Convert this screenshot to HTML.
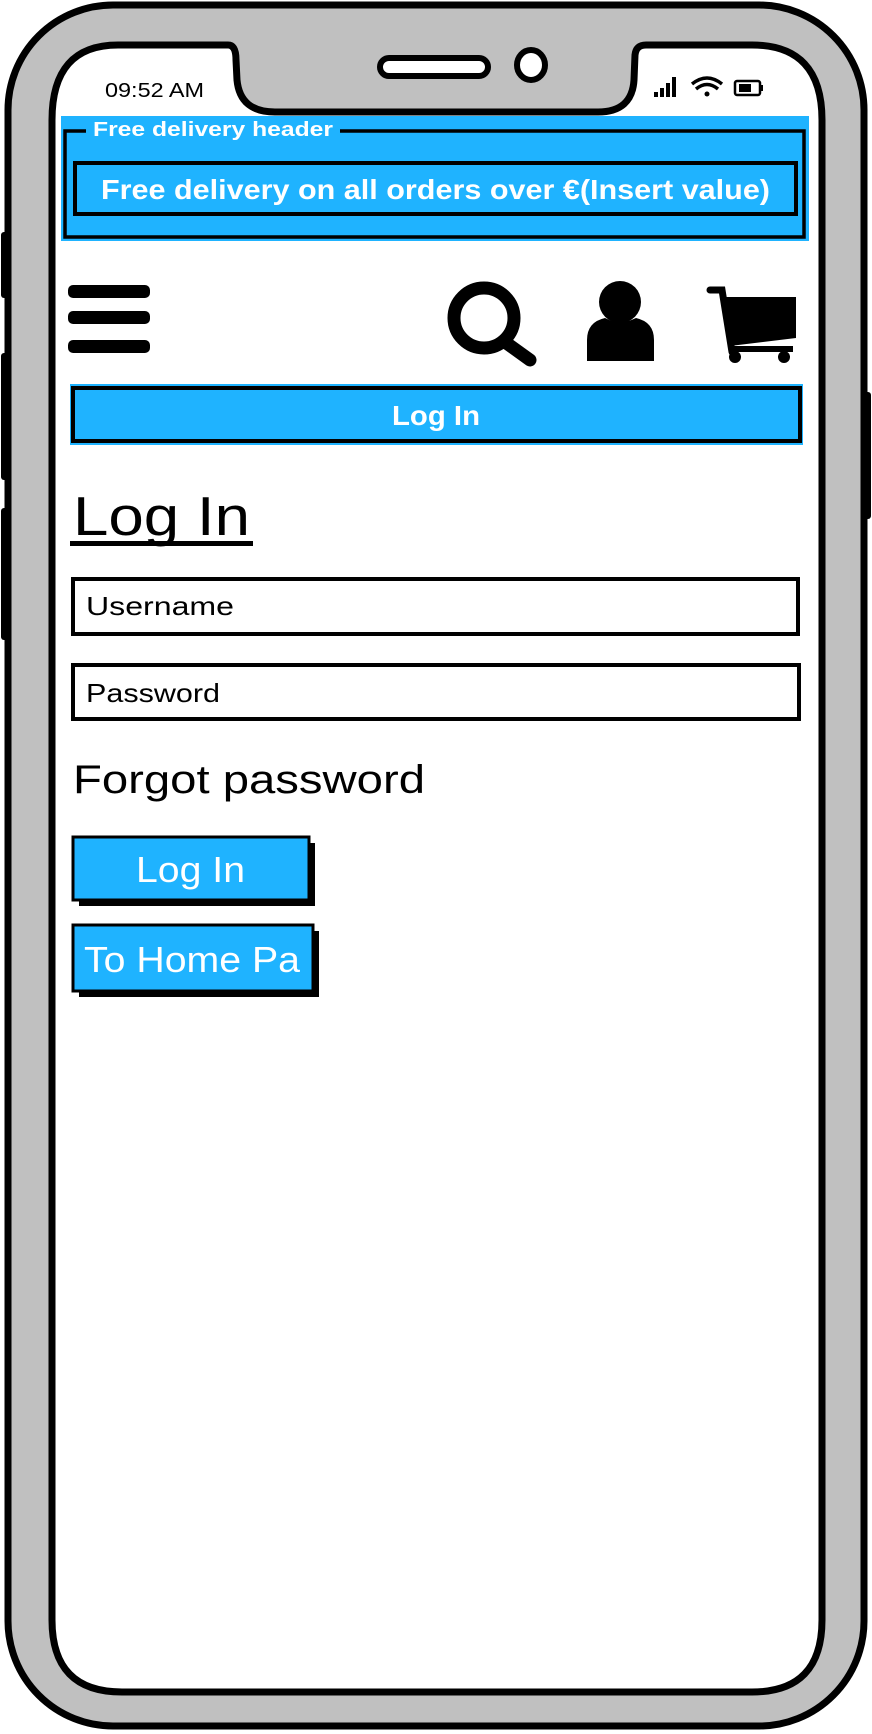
<!DOCTYPE html>
<html><head><meta charset="utf-8"><style>html,body{margin:0;padding:0;background:#fff}svg{display:block}text{font-family:"Liberation Sans",sans-serif}</style></head>
<body>
<svg width="872" height="1734" viewBox="0 0 872 1734" xmlns="http://www.w3.org/2000/svg">
<!-- side buttons -->
<rect x="1" y="232" width="8" height="66" rx="3" fill="#000"/>
<rect x="1" y="353" width="8" height="127" rx="3" fill="#000"/>
<rect x="1" y="508" width="8" height="132" rx="3" fill="#000"/>
<rect x="862" y="392" width="9" height="127" rx="3" fill="#000"/>
<!-- phone body -->
<rect x="8" y="5" width="856" height="1721" rx="105" fill="#c0c0c0" stroke="#000" stroke-width="7"/>
<!-- screen -->
<path d="M118 45 H228 Q236 45 236 60 L237 80 Q240 112 275 112 H598 Q632 112 634 80 L635 55 Q636 45 646 45 H752 Q822 45 822 120 V1620 Q822 1692 752 1692 H122 Q52 1692 52 1620 V120 Q52 45 118 45 Z" fill="#fff" stroke="#000" stroke-width="7"/>
<!-- speaker & camera -->
<rect x="380" y="58" width="108" height="18" rx="9" fill="#fff" stroke="#000" stroke-width="6"/>
<ellipse cx="531" cy="65" rx="14" ry="15" fill="#fff" stroke="#000" stroke-width="6"/>
<!-- status -->
<text x="105" y="97" font-size="20" textLength="99" lengthAdjust="spacingAndGlyphs">09:52 AM</text>
<rect x="654" y="92" width="4" height="5" fill="#000"/><rect x="660" y="88" width="4" height="9" fill="#000"/><rect x="666" y="83" width="4" height="14" fill="#000"/><rect x="672" y="77" width="4" height="20" fill="#000"/>
<path d="M692 84 Q707 72 722 84" fill="none" stroke="#000" stroke-width="3.5"/><path d="M696 89 Q707 80 718 89" fill="none" stroke="#000" stroke-width="3.5"/><circle cx="707" cy="94" r="2.5" fill="#000"/>
<rect x="735" y="81" width="25" height="14" rx="2" fill="none" stroke="#000" stroke-width="2.5"/><rect x="739" y="84" width="12" height="8" fill="#000"/><rect x="761" y="85" width="2" height="6" fill="#000"/>
<!-- free delivery header -->
<rect x="61" y="116" width="748" height="125" fill="#1fb3ff"/>
<rect x="65" y="131" width="739" height="106" fill="none" stroke="#000" stroke-width="3.5"/>
<rect x="86" y="118" width="254" height="22" fill="#1fb3ff"/>
<text x="93" y="136" font-size="20" font-weight="bold" fill="#fff" textLength="240" lengthAdjust="spacingAndGlyphs">Free delivery header</text>
<rect x="75" y="163" width="721" height="51" fill="#1fb3ff" stroke="#000" stroke-width="4"/>
<text x="101" y="199" font-size="28" font-weight="bold" fill="#fff" textLength="669" lengthAdjust="spacingAndGlyphs">Free delivery on all orders over €(Insert value)</text>
<!-- nav icons -->
<rect x="68" y="285" width="82" height="13" rx="5" fill="#000"/><rect x="68" y="311" width="82" height="13" rx="5" fill="#000"/><rect x="68" y="340" width="82" height="13" rx="5" fill="#000"/>
<circle cx="484" cy="318" r="30" fill="none" stroke="#000" stroke-width="13"/>
<line x1="505" y1="342" x2="530" y2="360" stroke="#000" stroke-width="13" stroke-linecap="round"/>
<circle cx="620" cy="302" r="21" fill="#000"/>
<path d="M587 361 V340 Q587 322 605 318 Q620 326 636 318 Q654 322 654 340 V361 Z" fill="#000"/>
<path d="M710 290 H722 L732 352" fill="none" stroke="#000" stroke-width="7" stroke-linecap="round"/>
<path d="M724 297 H796 V338 L730 346 Z" fill="#000"/>
<rect x="729" y="346" width="64" height="6" fill="#000"/>
<circle cx="735" cy="357" r="6" fill="#000"/><circle cx="784" cy="357" r="6" fill="#000"/>
<!-- Log In bar -->
<rect x="70" y="384" width="733" height="61" fill="#1fb3ff"/>
<rect x="73" y="388" width="727" height="53" fill="#1fb3ff" stroke="#000" stroke-width="4"/>
<text x="392" y="425" font-size="28" font-weight="bold" fill="#fff" textLength="88" lengthAdjust="spacingAndGlyphs">Log In</text>
<!-- heading -->
<text x="73" y="535" font-size="55" textLength="177" lengthAdjust="spacingAndGlyphs">Log In</text>
<rect x="70" y="541" width="183" height="5" fill="#000"/>
<!-- inputs -->
<rect x="73" y="579" width="725" height="55" fill="#fff" stroke="#000" stroke-width="4"/>
<text x="86" y="615" font-size="26" textLength="148" lengthAdjust="spacingAndGlyphs">Username</text>
<rect x="73" y="665" width="726" height="54" fill="#fff" stroke="#000" stroke-width="4"/>
<text x="86" y="702" font-size="26" textLength="134" lengthAdjust="spacingAndGlyphs">Password</text>
<text x="73" y="793" font-size="40" textLength="352" lengthAdjust="spacingAndGlyphs">Forgot password</text>
<!-- buttons -->
<rect x="79" y="843" width="236" height="63" fill="#000"/>
<rect x="73" y="837" width="236" height="63" fill="#1fb3ff" stroke="#000" stroke-width="3"/>
<text x="136" y="882" font-size="36" fill="#fff" textLength="109" lengthAdjust="spacingAndGlyphs">Log In</text>
<rect x="79" y="931" width="240" height="66" fill="#000"/>
<rect x="73" y="925" width="240" height="66" fill="#1fb3ff" stroke="#000" stroke-width="3"/>
<text x="84" y="972" font-size="36" fill="#fff" textLength="216" lengthAdjust="spacingAndGlyphs">To Home Pa</text>
</svg>
</body></html>
